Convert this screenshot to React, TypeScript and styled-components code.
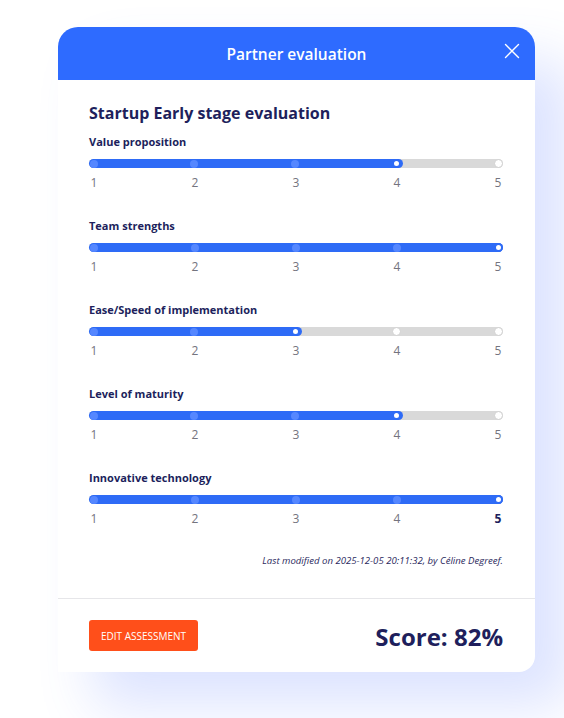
import styled, { createGlobalStyle } from 'styled-components'

const GlobalStyle = createGlobalStyle`
  body {
    margin: 0;
    background: #ffffff;
    font-family: 'Open Sans', 'Liberation Sans', sans-serif;
  }
`

const Page = styled.div`
  width: 564px;
  height: 718px;
  padding: 27px 0 0 58px;
  box-sizing: border-box;
  overflow: hidden;
`

const Card = styled.div`
  width: 477px;
  background: #fff;
  border-radius: 20px 20px 16px 0;
  box-shadow: 36px 34px 56px rgba(80, 115, 255, 0.2);
  overflow: hidden;
`

const Header = styled.div`
  height: 53px;
  background: #2e6bff;
  display: flex;
  align-items: center;
  justify-content: center;
  position: relative;
  color: #fff;
  font-size: 15.5px;
  font-weight: 600;
`

const CloseButton = styled.button`
  position: absolute;
  top: 16px;
  right: 15px;
  width: 16px;
  height: 16px;
  padding: 0;
  border: none;
  background: none;
  display: flex;
`

const Body = styled.div`
  padding: 21px 32px 31px 31px;
  color: #201f5c;
`

const Title = styled.h2`
  margin: 0 0 9px;
  font-size: 16px;
  font-weight: 700;
  line-height: 24px;
`

const Criterion = styled.div`
  margin-bottom: 27px;
`

const Label = styled.div`
  font-size: 11px;
  font-weight: 700;
  line-height: 16px;
  margin-bottom: 9px;
`

const Track = styled.div`
  position: relative;
  height: 9px;
  border-radius: 5px;
  background: #d9d9d9;
  display: flex;
  align-items: center;
  justify-content: space-between;
  padding: 0 0.5px;
`

const Fill = styled.div`
  position: absolute;
  left: 0;
  top: 0;
  bottom: 0;
  border-radius: 5px;
  background: #2e6bf6;
`

const Dot = styled.span<{ $state: 'filled' | 'active' | 'empty' }>`
  position: relative;
  width: ${(p) => (p.$state === 'filled' ? 8 : 9)}px;
  height: ${(p) => (p.$state === 'filled' ? 8 : 9)}px;
  border-radius: 50%;
  box-sizing: border-box;
  background: ${(p) => (p.$state === 'filled' ? '#5587ff' : '#fff')};
  border: ${(p) =>
    p.$state === 'active' ? '2px solid #2e6bf6' : p.$state === 'empty' ? '1px solid #d0d0d0' : 'none'};
`

const Numbers = styled.div`
  display: flex;
  justify-content: space-between;
  margin-top: 7px;
`

const Num = styled.span<{ $bold?: boolean }>`
  width: 10px;
  text-align: center;
  font-size: 12px;
  line-height: 16px;
  color: ${(p) => (p.$bold ? '#201f5c' : '#74747e')};
  font-weight: ${(p) => (p.$bold ? 700 : 400)};
`

const Modified = styled.div`
  margin-top: 24px;
  text-align: right;
  font-size: 9.6px;
  font-style: italic;
  color: #2b2a5e;
`

const Footer = styled.div`
  border-top: 1px solid #e6e6e9;
  height: 73px;
  padding: 0 32px 0 31px;
  display: flex;
  align-items: center;
  justify-content: space-between;
`

const EditButton = styled.button`
  height: 31px;
  width: 109px;
  border: none;
  border-radius: 3px;
  background: #ff4f1a;
  color: #fff;
  font-family: 'Open Sans', 'Liberation Sans', sans-serif;
  font-size: 10px;
  font-weight: 500;
  padding: 0;
`

const Score = styled.div`
  font-size: 24px;
  font-weight: 700;
  color: #201f5c;
  margin-top: 2px;
`

const criteria = [
  { label: 'Value proposition', value: 4 },
  { label: 'Team strengths', value: 5 },
  { label: 'Ease/Speed of implementation', value: 3 },
  { label: 'Level of maturity', value: 4 },
  { label: 'Innovative technology', value: 5, boldLast: true },
]

function Slider({ value, boldLast }: { value: number; boldLast?: boolean }) {
  const fillWidth = ((value - 1) / 4) * 404 + 11
  return (
    <>
      <Track>
        <Fill style={{ width: Math.min(fillWidth, 414) }} />
        {[1, 2, 3, 4, 5].map((n) => (
          <Dot key={n} $state={n < value ? 'filled' : n === value ? 'active' : 'empty'} />
        ))}
      </Track>
      <Numbers>
        {[1, 2, 3, 4, 5].map((n) => (
          <Num key={n} $bold={boldLast && n === 5}>
            {n}
          </Num>
        ))}
      </Numbers>
    </>
  )
}

export default function App() {
  return (
    <Page>
      <GlobalStyle />
      <Card>
        <Header>
          Partner evaluation
          <CloseButton aria-label='Close'>
            <svg width='16' height='16' viewBox='0 0 16 16'>
              <path d='M1.5 1.5 L14.5 14.5 M14.5 1.5 L1.5 14.5' stroke='#fff' strokeWidth='1.4' strokeLinecap='round' />
            </svg>
          </CloseButton>
        </Header>
        <Body>
          <Title>Startup Early stage evaluation</Title>
          {criteria.map((c) => (
            <Criterion key={c.label}>
              <Label>{c.label}</Label>
              <Slider value={c.value} boldLast={c.boldLast} />
            </Criterion>
          ))}
          <Modified>Last modified on 2025-12-05 20:11:32, by Céline Degreef.</Modified>
        </Body>
        <Footer>
          <EditButton>EDIT ASSESSMENT</EditButton>
          <Score>Score: 82%</Score>
        </Footer>
      </Card>
    </Page>
  )
}
